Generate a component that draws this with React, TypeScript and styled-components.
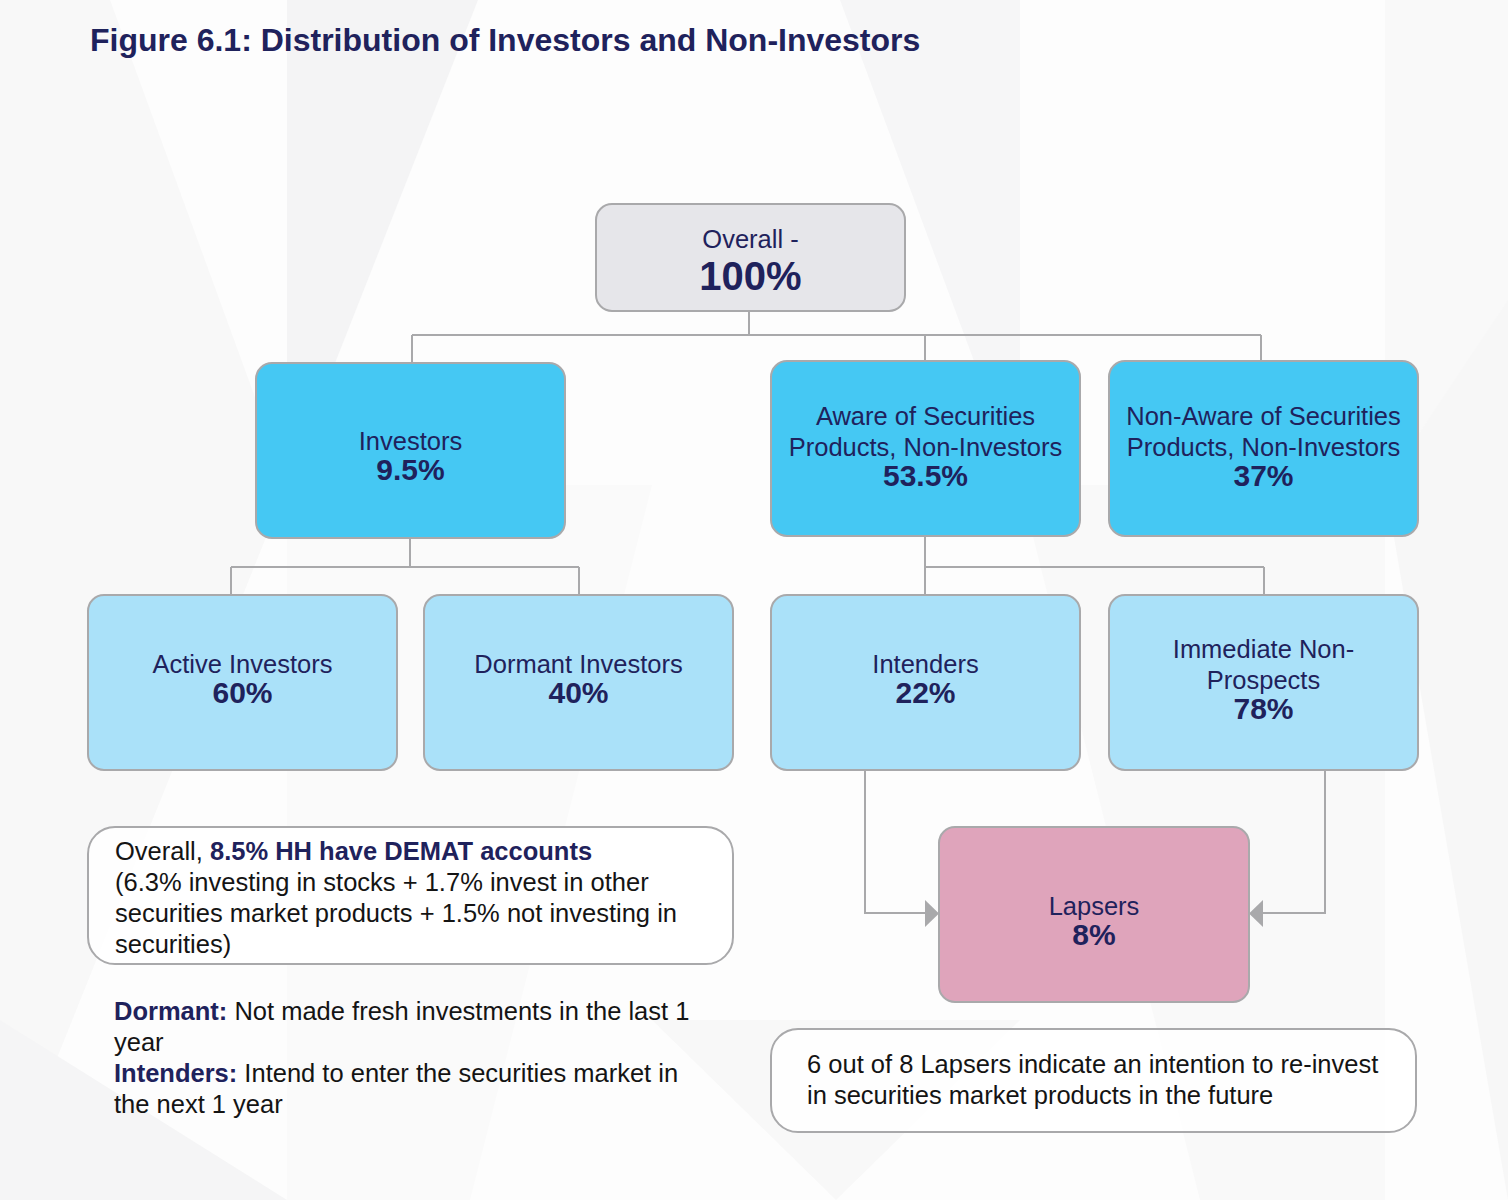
import styled, { createGlobalStyle } from 'styled-components';

type Tone = 'gray' | 'blue' | 'light' | 'pink';

interface NodeData {
    id: string;
    x: number;
    y: number;
    w: number;
    h: number;
    dy: number;
    tone: Tone;
    lines: string[];
    pct: string;
}

const NAVY = '#1f225c';
const LINE = '#a9a9ab';

const tones: Record<Tone, string> = {
    gray: '#e6e6ea',
    blue: '#45c8f3',
    light: '#aae1f9',
    pink: '#dfa4bb',
};

// dy nudges the text block off centre, as the source chart does
const nodes: NodeData[] = [
    { id: 'overall', x: 595, y: 203, w: 311, h: 109, dy: 3, tone: 'gray', lines: ['Overall -'], pct: '100%' },
    { id: 'investors', x: 255, y: 362, w: 311, h: 177, dy: 4, tone: 'blue', lines: ['Investors'], pct: '9.5%' },
    { id: 'aware', x: 770, y: 360, w: 311, h: 177, dy: -4, tone: 'blue', lines: ['Aware of Securities', 'Products, Non-Investors'], pct: '53.5%' },
    { id: 'nonaware', x: 1108, y: 360, w: 311, h: 177, dy: -4, tone: 'blue', lines: ['Non-Aware of Securities', 'Products, Non-Investors'], pct: '37%' },
    { id: 'active', x: 87, y: 594, w: 311, h: 177, dy: -5, tone: 'light', lines: ['Active Investors'], pct: '60%' },
    { id: 'dormant', x: 423, y: 594, w: 311, h: 177, dy: -5, tone: 'light', lines: ['Dormant Investors'], pct: '40%' },
    { id: 'intenders', x: 770, y: 594, w: 311, h: 177, dy: -5, tone: 'light', lines: ['Intenders'], pct: '22%' },
    { id: 'immediate', x: 1108, y: 594, w: 311, h: 177, dy: -5, tone: 'light', lines: ['Immediate Non-', 'Prospects'], pct: '78%' },
    { id: 'lapsers', x: 938, y: 826, w: 312, h: 177, dy: 5, tone: 'pink', lines: ['Lapsers'], pct: '8%' },
];

const connectors = [
    'M749 311 V335',
    'M412 335 H1261',
    'M412 335 V362',
    'M925 335 V360',
    'M1261 335 V360',
    'M410 538 V567',
    'M231 567 H579',
    'M231 567 V594',
    'M579 567 V594',
    'M925 536 V594',
    'M925 567 H1264',
    'M1264 567 V594',
    'M865 770 V913 H927',
    'M1325 770 V913 H1260',
];

const GlobalStyle = createGlobalStyle`
    * { box-sizing: border-box; }
    body {
        margin: 0;
        background: #ffffff;
        font-family: "Liberation Sans", Arial, sans-serif;
    }
`;

const Canvas = styled.div`
    position: relative;
    width: 1508px;
    height: 1200px;
    overflow: hidden;
    background: #fdfdfd;
`;

const Backdrop = styled.svg`
    position: absolute;
    inset: 0;
    z-index: 0;
`;

const Title = styled.h1`
    position: relative;
    z-index: 2;
    margin: 0;
    padding: 22px 0 0 90px;
    font-size: 32px;
    line-height: 37px;
    font-weight: 700;
    color: ${ NAVY };
`;

const Wires = styled.svg`
    position: absolute;
    inset: 0;
    z-index: 1;
`;

const Node = styled.div<{ $x: number; $y: number; $w: number; $h: number; $dy: number; $tone: Tone }>`
    position: absolute;
    z-index: 2;
    left: ${ p => p.$x }px;
    top: ${ p => p.$y }px;
    width: ${ p => p.$w }px;
    height: ${ p => p.$h }px;
    padding-top: ${ p => Math.max( p.$dy, 0 ) * 2 }px;
    padding-bottom: ${ p => Math.max( -p.$dy, 0 ) * 2 }px;
    display: flex;
    flex-direction: column;
    align-items: center;
    justify-content: center;
    background: ${ p => tones[ p.$tone ] };
    border: 2px solid ${ LINE };
    border-radius: 17px;
    color: ${ NAVY };
    text-align: center;
`;

const Label = styled.div`
    font-size: 25.5px;
    line-height: 31px;
`;

const Pct = styled.div<{ $big?: boolean }>`
    font-size: ${ p => p.$big ? 40 : 30 }px;
    line-height: ${ p => p.$big ? 42 : 26 }px;
    font-weight: 700;
`;

const NoteBox = styled.div<{ $x: number; $y: number; $w: number; $h: number; $pad: string }>`
    position: absolute;
    z-index: 2;
    left: ${ p => p.$x }px;
    top: ${ p => p.$y }px;
    width: ${ p => p.$w }px;
    height: ${ p => p.$h }px;
    padding: ${ p => p.$pad };
    background: rgba(255, 255, 255, 0.85);
    border: 2px solid ${ LINE };
    border-radius: 28px;
    font-size: 25.5px;
    line-height: 31px;
    color: #141414;
`;

const Definitions = styled.div`
    position: absolute;
    z-index: 2;
    left: 114px;
    top: 996px;
    width: 600px;
    font-size: 25.5px;
    line-height: 31px;
    color: #141414;
`;

const Strong = styled.b`
    font-weight: 700;
    color: ${ NAVY };
`;

const App = () => {
    return (
        <Canvas>
            <GlobalStyle />

            <Backdrop width="1508" height="1200" viewBox="0 0 1508 1200">
                <polygon points="0,0 110,0 287,485 0,485" fill="#f8f8f8" />
                <polygon points="287,0 478,0 287,485" fill="#f4f4f5" />
                <polygon points="840,0 1020,0 1020,485" fill="#f6f6f7" />
                <polygon points="1385,0 1508,0 1508,485 1385,485" fill="#f9f9f9" />
                <polygon points="0,485 287,485 0,1200" fill="#f8f8f8" />
                <polygon points="287,485 652,485 470,1200 287,1200" fill="#fafafa" />
                <polygon points="1020,485 1385,485 1385,1200 1200,1200" fill="#f9f9f9" />
                <polygon points="1385,485 1508,300 1508,1200" fill="#f7f7f7" />
                <polygon points="652,1020 1020,1020 836,1200" fill="#f8f8f8" />
                <polygon points="0,1020 287,1200 0,1200" fill="#f5f5f6" />
            </Backdrop>

            <Title>Figure 6.1: Distribution of Investors and Non-Investors</Title>

            <Wires width="1508" height="1200" viewBox="0 0 1508 1200">
                {
                    connectors.map( d => (
                        <path key={ d } d={ d } fill="none" stroke={ LINE } strokeWidth="2" />
                    ))
                }
                <polygon points="925,900 939,913.5 925,927" fill={ LINE } />
                <polygon points="1263,900 1249,913.5 1263,927" fill={ LINE } />
            </Wires>

            {
                nodes.map( node => (
                    <Node
                        key={ node.id }
                        $x={ node.x }
                        $y={ node.y }
                        $w={ node.w }
                        $h={ node.h }
                        $dy={ node.dy }
                        $tone={ node.tone }
                    >
                        { node.lines.map( line => <Label key={ line }>{ line }</Label> ) }
                        <Pct $big={ node.id === 'overall' }>{ node.pct }</Pct>
                    </Node>
                ))
            }

            <NoteBox $x={ 87 } $y={ 826 } $w={ 647 } $h={ 139 } $pad="8px 16px 0 26px">
                Overall, <Strong>8.5% HH have DEMAT accounts</Strong><br />
                (6.3% investing in stocks + 1.7% invest in other<br />
                securities market products + 1.5% not investing in<br />
                securities)
            </NoteBox>

            <Definitions>
                <Strong>Dormant:</Strong> Not made fresh investments in the last 1<br />
                year<br />
                <Strong>Intenders:</Strong> Intend to enter the securities market in<br />
                the next 1 year
            </Definitions>

            <NoteBox $x={ 770 } $y={ 1028 } $w={ 647 } $h={ 105 } $pad="19px 16px 0 35px">
                6 out of 8 Lapsers indicate an intention to re-invest<br />
                in securities market products in the future
            </NoteBox>
        </Canvas>
    );
};

export default App;
